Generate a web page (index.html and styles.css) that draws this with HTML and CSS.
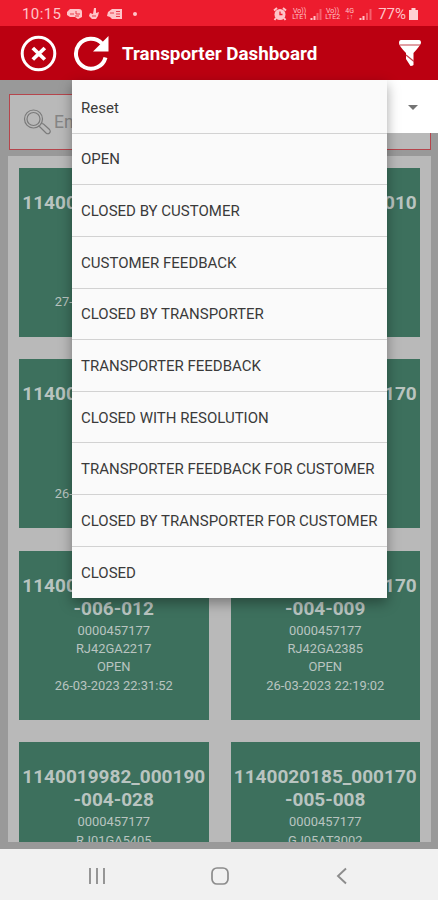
FILE: index.html
```html
<!DOCTYPE html>
<html lang="en">
<head>
    <meta charset="UTF-8">
    <meta name="viewport" content="width=device-width, initial-scale=1.0">
    <title>Transporter Dashboard</title>
    <link rel="stylesheet" href="styles.css">
</head>
<body>
    <div class="status-bar">
        <span class="time">10:15</span>
        <svg class="notify" width="72" height="14" viewBox="0 0 72 14">
            <g fill="#ffc4c8">
                <path d="M0 5l3-3h9a3 3 0 0 1 3 3v5l-4 2-3-2H3L0 8z"/>
                <path d="M27 1h2v5l3-1-1 4-2 3h-4l-3-3 1-3 3 1z"/>
                <path d="M41 5l4-3h10v10H45l-2-2-3-1z"/>
                <circle cx="68" cy="7" r="2"/>
            </g>
            <path d="M3 7h4M9 4v3h4M8 9h4M25 9h4M43 6h4M49 4.500h4M49 7h4M49 9.500h4" stroke="#e83a49" fill="none"/>
        </svg>
        <div class="status-right">
            <svg width="14" height="14" viewBox="0 0 14 14">
                <circle cx="7" cy="7.500" r="5.500" fill="#ffc4c8"/>
                <path d="M1 3.500L4 1M13 3.500L10 1M3 11l-1.500 2M11 11l1.500 2" stroke="#ffc4c8" stroke-width="2"/>
                <path d="M7 4.500V7.500h2.500" stroke="#ed1c2e" stroke-width="1.300" fill="none"/>
            </svg>
            <span class="volte">Vo))<br>LTE1</span>
            <svg class="signal" width="12" height="12" viewBox="0 0 12 12"><path d="M1.500 12v-2M4.500 12V8" stroke="#ffc4c8" stroke-width="2"/><path d="M7.500 12V5M10.500 12V1" stroke="#f5616d" stroke-width="2"/></svg>
            <span class="volte second">Vo))<br>LTE2</span>
            <span class="volte net">4G<br>↓↑</span>
            <svg class="signal" width="13" height="12" viewBox="0 0 13 12"><path d="M1.500 12v-2M4.500 12V8" stroke="#ffc4c8" stroke-width="2"/><path d="M8 12V5M11.500 12V1" stroke="#f5616d" stroke-width="2"/></svg>
            <span class="percent">77%</span>
            <svg class="battery" width="9" height="12" viewBox="0 0 9 12"><path d="M2.500 0h4v2H9v10H0V2h2.500z" fill="#ffd0d3"/></svg>
        </div>
    </div>

    <header class="app-bar">
        <svg width="37" height="37" viewBox="0 0 37 37" fill="none" stroke="#fff">
            <circle cx="18.500" cy="18.500" r="16.300" stroke-width="3"/>
            <path d="M12.800 13l12 11.500M24.800 13l-12 11.500" stroke-width="3.800"/>
        </svg>
        <svg class="refresh" width="37" height="37" viewBox="0 0 37 37">
            <path d="M32.500 22.500A15 15 0 1 1 29 8.500" fill="none" stroke="#fff" stroke-width="4"/>
            <path d="M35.500 1v15.500H20l6-6z" fill="#fff"/>
        </svg>
        <h1>Transporter Dashboard</h1>
        <svg class="filter" width="24" height="28" viewBox="0 0 24 28">
            <path d="M3 1h18q2 0 2 3-1 3-7.500 10v12q-1 1-3 1L8 20v-6Q1 7 1 4q0-3 2-3z" fill="#fff"/>
            <path d="M2 6h20M8 16l8 6.500" stroke="#c4424d" stroke-width="1.200"/>
        </svg>
    </header>

    <main class="content">
        <div class="search">
            <svg width="28" height="27" viewBox="0 0 28 27" fill="none" stroke="#7a7a7a" stroke-width="1.200">
                <circle cx="10.500" cy="10" r="9"/>
                <circle cx="10.500" cy="10" r="6.500"/>
                <path d="M15 17l2 1 6 6q2 1.500 3.500 0t0-3.500l-6-5.500-2-.5"/>
            </svg>
            <span>En</span>
        </div>

        <div class="list">
            <div class="card">
                <h2>1140019982_000190<br>-006-010</h2>
                <p>0000457177</p>
                <p>RJ42GA2217</p>
                <p>OPEN</p>
                <p>27-03-2023 22:31:52</p>
            </div>
            <div class="card">
                <h2>1140020185_000010<br>-004-010</h2>
                <p>0000457177</p>
                <p>RJ42GA2385</p>
                <p>OPEN</p>
                <p>27-03-2023 22:19:02</p>
            </div>
            <div class="card">
                <h2>1140019982_000190<br>-006-011</h2>
                <p>0000457177</p>
                <p>RJ42GA2217</p>
                <p>OPEN</p>
                <p>26-03-2023 22:31:52</p>
            </div>
            <div class="card">
                <h2>1140020185_000170<br>-004-008</h2>
                <p>0000457177</p>
                <p>RJ42GA2385</p>
                <p>OPEN</p>
                <p>26-03-2023 22:19:02</p>
            </div>
            <div class="card">
                <h2>1140019982_000190<br>-006-012</h2>
                <p>0000457177</p>
                <p>RJ42GA2217</p>
                <p>OPEN</p>
                <p>26-03-2023 22:31:52</p>
            </div>
            <div class="card">
                <h2>1140020185_000170<br>-004-009</h2>
                <p>0000457177</p>
                <p>RJ42GA2385</p>
                <p>OPEN</p>
                <p>26-03-2023 22:19:02</p>
            </div>
            <div class="card">
                <h2>1140019982_000190<br>-004-028</h2>
                <p>0000457177</p>
                <p>RJ01GA5405</p>
            </div>
            <div class="card">
                <h2>1140020185_000170<br>-005-008</h2>
                <p>0000457177</p>
                <p>GJ05AT3002</p>
            </div>
        </div>

        <!-- Status filter -->
        <div class="spinner"><span class="caret"></span></div>
        <ul class="menu">
            <li>Reset</li>
            <li>OPEN</li>
            <li>CLOSED BY CUSTOMER</li>
            <li>CUSTOMER FEEDBACK</li>
            <li>CLOSED BY TRANSPORTER</li>
            <li>TRANSPORTER FEEDBACK</li>
            <li>CLOSED WITH RESOLUTION</li>
            <li>TRANSPORTER FEEDBACK FOR CUSTOMER</li>
            <li>CLOSED BY TRANSPORTER FOR CUSTOMER</li>
            <li>CLOSED</li>
        </ul>
    </main>

    <nav class="nav-bar">
        <svg width="18" height="18" viewBox="0 0 18 18"><path d="M2 1v16M9 1v16M16 1v16" stroke="#8c8c8c" stroke-width="1.800"/></svg>
        <svg width="20" height="20" viewBox="0 0 20 20"><rect x="2" y="2" width="16" height="16" rx="5" fill="none" stroke="#8c8c8c" stroke-width="1.700"/></svg>
        <svg width="18" height="18" viewBox="0 0 18 18"><path d="M13 1.500L5 9l8 7.500" fill="none" stroke="#8c8c8c" stroke-width="1.900"/></svg>
    </nav>
</body>
</html>
```
FILE: styles.css
```css
* {
    box-sizing: border-box;
}
body {
    margin: 0;
    height: 900px;
    display: flex;
    flex-direction: column;
    overflow: hidden;
    font-family: Roboto, "Liberation Sans", sans-serif;
    background: #f1f1f1;
}
h1, h2, p, ul {
    margin: 0;
    padding: 0;
}
svg {
    display: block;
    flex: none;
}
.status-bar {
    height: 26px;
    flex: none;
    display: flex;
    align-items: center;
    padding: 2px 20px 0 22px;
    background: #ed1c2e;
    color: #ffc4c8;
}
.time {
    width: 45px;
    font-size: 15px;
    letter-spacing: 0.4px;
}
.status-right {
    margin-left: auto;
    display: flex;
    align-items: center;
}
.volte {
    width: 17px;
    margin-left: 4px;
    font-size: 7px;
    line-height: 6.5px;
    text-align: center;
}
.signal {
    margin-left: 2px;
}
.net {
    width: 11px;
    margin-left: 3px;
}
.volte.second {
    margin-left: 2px;
}
.net + .signal {
    margin-left: 4px;
}
.percent {
    margin-left: 6px;
    font-size: 15px;
}
.battery {
    margin-left: 3px;
}
.app-bar {
    height: 54px;
    flex: none;
    display: flex;
    align-items: center;
    padding: 0 16px 0 20px;
    background: #bb0011;
    color: #fff;
}
.refresh {
    margin-left: 16px;
}
.app-bar h1 {
    margin: 2px 0 0 12px;
    font-size: 18.8px;
    line-height: 24px;
    white-space: nowrap;
}
.filter {
    margin-left: auto;
}
.content {
    position: relative;
    height: 769px;
    flex: none;
    padding: 14px 7px 7px 8px;
    background: #999;
}
.search {
    height: 56px;
    margin: 0 0 6px 1px;
    padding: 0 0 0 13px;
    display: flex;
    align-items: center;
    gap: 3px;
    border: 1px solid #b5454c;
    background: #b9b9b9;
    color: #858585;
    font-size: 17.5px;
}
.list {
    height: 686px;
    padding: 11.5px 11px 0;
    display: grid;
    grid-template-columns: 189.5px 189.5px;
    grid-auto-rows: 169px;
    justify-content: space-between;
    align-content: start;
    gap: 22.6px 0;
    overflow: hidden;
    background: #b9b9b9;
}
.card {
    padding-top: 23px;
    background: #3d705d;
    color: #b9c4c0;
    text-align: center;
}
.card h2 {
    font-size: 19px;
    line-height: 23px;
    margin-bottom: 2px;
}
.card p {
    font-size: 12.9px;
    line-height: 18.3px;
}
.spinner {
    position: absolute;
    top: 0;
    right: 0;
    width: 60px;
    height: 52.5px;
    display: flex;
    align-items: center;
    justify-content: flex-end;
    padding: 2px 20px 0 0;
    background: #fff;
}
.caret {
    border: 5px solid transparent;
    border-top-color: #747474;
    border-bottom: 0;
}
.menu {
    position: absolute;
    top: 0;
    left: 72px;
    width: 315px;
    height: 518px;
    padding-top: 2px;
    list-style: none;
    background: #fafafa;
    box-shadow: 0 5px 12px rgba(0, 0, 0, 0.35);
}
.menu li {
    height: 51.65px;
    padding: 1px 0 0 9px;
    display: flex;
    align-items: center;
    border-bottom: 1px solid #d2d2d2;
    color: #3a3a3a;
    font-size: 15px;
    white-space: nowrap;
}
.menu li:last-child {
    border-bottom: 0;
}
.nav-bar {
    flex: 1;
    display: flex;
    align-items: center;
    justify-content: space-between;
    padding: 2px 87px 0 88px;
    background: #f1f1f1;
}
```
